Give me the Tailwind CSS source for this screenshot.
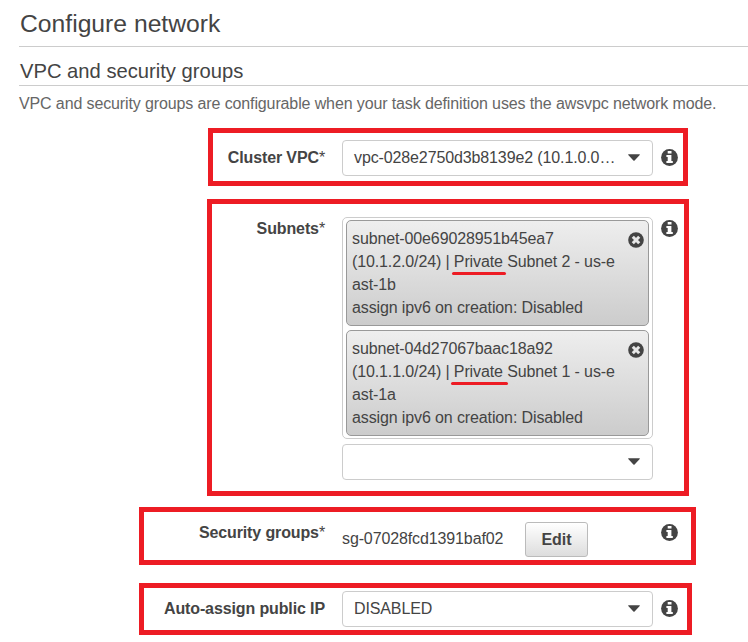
<!DOCTYPE html>
<html lang="en">
<head>
<meta charset="utf-8">
<title>Configure network</title>
<script src="https://cdn.jsdelivr.net/npm/@tailwindcss/browser@4"></script>
</head>
<body class="bg-white">
<svg class="hidden">
  <symbol id="info" viewBox="0 0 17 17"><circle cx="8.5" cy="8.5" r="8.4" fill="#444"/><path fill="#fff" d="M6.7 1.9h3.8v2.6H6.7zM5.4 6h5v6h1.4v2H5.4v-2h1.3V8H5.4z"/></symbol>
  <symbol id="close" viewBox="0 0 16 16"><circle cx="8" cy="8" r="7.8" fill="#444"/><path stroke="#e8e8e8" stroke-width="3" d="M4.8 4.8l6.4 6.4M11.2 4.8l-6.4 6.4"/></symbol>
  <symbol id="caret" viewBox="0 0 12 7"><path fill="#444" d="M.3.2h11.4q.3.5-.2 1L6.6 6.4q-.6.5-1.2 0L.5 1.2q-.5-.5-.2-1z"/></symbol>
</svg>
<main class="w-[748px] h-[642px] overflow-hidden flex flex-col items-start text-[16px] leading-[23px] tracking-[-0.12px] text-[#444] font-['Liberation_Sans',Arial,sans-serif]">
  <h1 class="ml-[19px] w-[729px] h-[47px] pt-[8px] pl-px border-b border-[#ccc] text-[24.7px] leading-[32px] tracking-normal">Configure network</h1>
  <h2 class="ml-[19px] w-[729px] h-[39px] pt-[11px] pl-px border-b border-[#ccc] text-[20.2px] leading-[26px] tracking-normal">VPC and security groups</h2>
  <p class="ml-[19px] mt-[6px] h-[23px] text-[#666] whitespace-nowrap">VPC and security groups are configurable when your task definition uses the awsvpc network mode.</p>

  <section class="ml-[208px] mt-[13px] w-[480px] h-[58px] border-5 border-[#ed1c24] flex items-start pt-[7px]">
    <div class="w-[112px] mt-[6px] text-right font-bold whitespace-nowrap">Cluster VPC<span class="font-normal">*</span></div>
    <div class="ml-[17px] w-[311px] h-[36px] border border-[#ccc] rounded-[4px] flex items-center justify-between pl-[11px] pr-[12px] pb-px"><span class="whitespace-nowrap">vpc-028e2750d3b8139e2 (10.1.0.0…</span><svg class="w-[12px] h-[7px]"><use href="#caret"/></svg></div>
    <svg class="ml-[8px] mt-[9px] w-[17px] h-[17px]"><use href="#info"/></svg>
  </section>

  <section class="ml-[207px] mt-[13px] w-[482px] h-[297px] border-5 border-[#ed1c24] flex items-start pt-[13px]">
    <div class="w-[113px] text-right font-bold whitespace-nowrap">Subnets<span class="font-normal">*</span></div>
    <div class="ml-[17px] w-[311px] flex flex-col gap-[5px]">
      <div class="h-[222px] border border-[#ccc] rounded-[5px] px-[3px] pt-[2px] flex flex-col gap-[4px]">
        <div class="relative h-[106px] border border-[#999] rounded-[5px] bg-linear-to-b from-[#eee] to-[#ccc] pl-[5px] pt-[6px] whitespace-nowrap">subnet-00e69028951b45ea7<br>(10.1.2.0/24) | <span class="relative">Private<i class="absolute left-[-2px] top-[19px] w-[54px] h-[3px] rounded-full bg-[#ed1c24]"></i></span> Subnet 2 - us-e<br>ast-1b<br>assign ipv6 on creation: Disabled<svg class="absolute right-[4px] top-[11px] w-[16px] h-[16px]"><use href="#close"/></svg></div>
        <div class="relative h-[106px] border border-[#999] rounded-[5px] bg-linear-to-b from-[#eee] to-[#ccc] pl-[5px] pt-[6px] whitespace-nowrap">subnet-04d27067baac18a92<br>(10.1.1.0/24) | <span class="relative">Private<i class="absolute left-[-3px] top-[19px] w-[57px] h-[3px] rounded-full bg-[#ed1c24]"></i></span> Subnet 1 - us-e<br>ast-1a<br>assign ipv6 on creation: Disabled<svg class="absolute right-[4px] top-[11px] w-[16px] h-[16px]"><use href="#close"/></svg></div>
      </div>
      <div class="h-[36px] border border-[#ccc] rounded-[4px] flex items-center justify-end pr-[12px] pb-px"><svg class="w-[12px] h-[7px]"><use href="#caret"/></svg></div>
    </div>
    <svg class="ml-[8px] mt-[3px] w-[17px] h-[17px]"><use href="#info"/></svg>
  </section>

  <section class="ml-[139px] mt-[11px] w-[557px] h-[58px] border-5 border-[#ed1c24] flex items-start pt-[9px]">
    <div class="w-[181px] text-right font-bold whitespace-nowrap">Security groups<span class="font-normal">*</span></div>
    <div class="ml-[17px] w-[311px] flex items-start">
      <span class="w-[183px] mt-[6px] whitespace-nowrap">sg-07028fcd1391baf02</span>
      <button class="mt-[1px] w-[63px] h-[35px] border border-[#bbb] rounded-[3px] bg-linear-to-b from-white to-[#ddd] font-bold tracking-normal">Edit</button>
    </div>
    <svg class="ml-[8px] mt-[3px] w-[17px] h-[17px]"><use href="#info"/></svg>
  </section>

  <section class="ml-[139px] mt-[18px] w-[553px] h-[52px] border-5 border-[#ed1c24] flex items-start pt-[3px]">
    <div class="w-[181px] mt-[6px] text-right font-bold whitespace-nowrap">Auto-assign public IP</div>
    <div class="ml-[17px] w-[311px] h-[36px] border border-[#ccc] rounded-[4px] flex items-center justify-between pl-[11px] pr-[12px] pb-px"><span>DISABLED</span><svg class="w-[12px] h-[7px]"><use href="#caret"/></svg></div>
    <svg class="ml-[8px] mt-[9px] w-[17px] h-[17px]"><use href="#info"/></svg>
  </section>
</main>
</body>
</html>
